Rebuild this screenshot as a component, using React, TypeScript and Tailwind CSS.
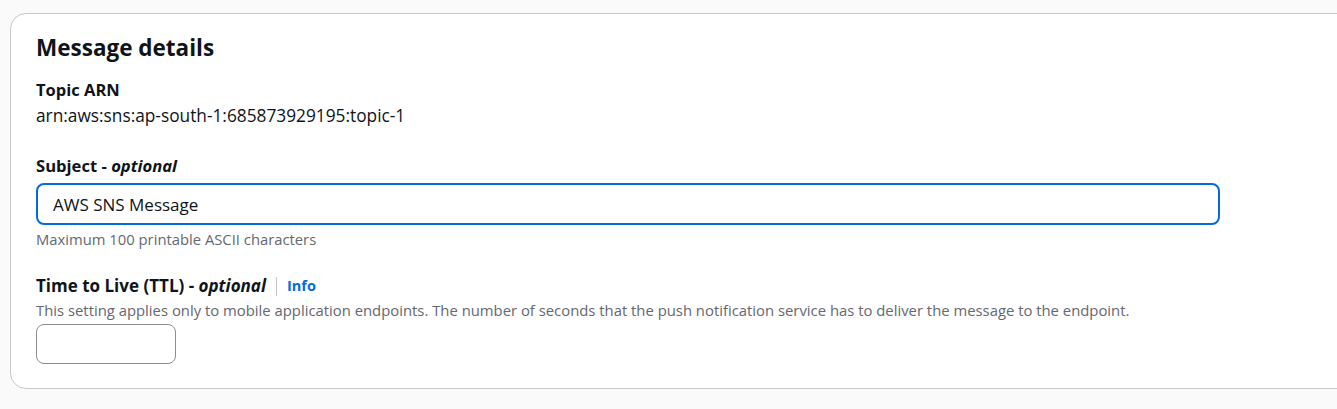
export default function App() {
  return (
    <div
      className="min-h-[409px] bg-[#fafafa] pt-[13px] pl-[10px] text-[#0f141a]"
      style={{ fontFamily: '"Open Sans", "Noto Sans", Arial, sans-serif' }}
    >
      <div className="-mr-4 rounded-2xl border border-[#c6c6cd] bg-white pl-[25px] pr-[130px] pt-[20px] pb-[24px]">
        <h2 className="text-[22.5px] font-bold leading-[28px]">Message details</h2>

        <div className="mt-[16px]">
          <div className="text-[16.5px] font-bold leading-[24px]">Topic ARN</div>
          <div className="text-[17.3px] leading-[28px]">arn:aws:sns:ap-south-1:685873929195:topic-1</div>
        </div>

        <div className="mt-[24px]">
          <label className="block text-[16.6px] font-bold leading-[24px]">
            Subject - <i>optional</i>
          </label>
          <input
            defaultValue="AWS SNS Message"
            className="mt-[5px] block h-[42px] w-[1184px] rounded-lg border-2 border-[#006ce0] px-[15px] text-[17px] outline-none"
          />
          <div className="mt-[4px] text-[14.8px] leading-[20px] text-[#656871]">Maximum 100 printable ASCII characters</div>
        </div>

        <div className="mt-[25px]">
          <div className="flex items-center text-[17px] leading-[24px]">
            <span className="font-bold">
              Time to Live (TTL) - <i>optional</i>
            </span>
            <span className="mx-[10px] h-[19px] w-px bg-[#c6c6cd]" />
            <a className="text-[14.5px] font-bold text-[#006ce0]">Info</a>
          </div>
          <div className="mt-[2px] text-[14.85px] leading-[20px] text-[#656871]">
            This setting applies only to mobile application endpoints. The number of seconds that the push notification service has to deliver the message to the endpoint.
          </div>
          <input className="mt-[4px] block h-[40px] w-[140px] rounded-lg border border-[#8c8c94] px-3 outline-none" />
        </div>
      </div>
    </div>
  )
}
